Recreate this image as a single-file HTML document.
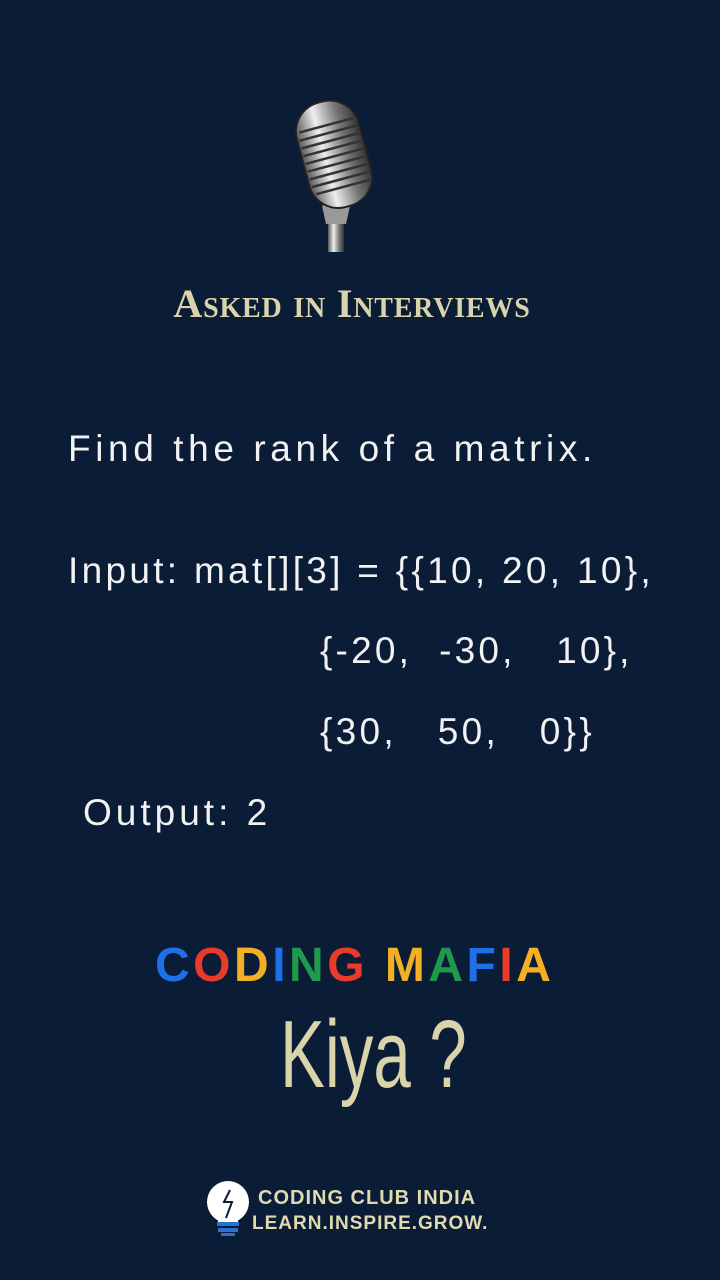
<!DOCTYPE html>
<html><head><meta charset="utf-8"><style>
html,body{margin:0;padding:0}
body{width:720px;height:1280px;background:#0b1c37;position:relative;overflow:hidden;font-family:"Liberation Sans",sans-serif;color:#f2f2f2}
.t{position:absolute;white-space:pre;font-size:37px;letter-spacing:4px;line-height:1}
</style></head><body>
<svg style="position:absolute;left:280px;top:94px" width="110" height="162" viewBox="0 0 110 162">
<defs><linearGradient id="g" x1="0" x2="1"><stop offset="0" stop-color="#555"/><stop offset=".35" stop-color="#eee"/><stop offset=".7" stop-color="#777"/><stop offset="1" stop-color="#333"/></linearGradient></defs>
<rect x="48" y="112" width="16" height="46" fill="url(#g)"/>
<path d="M42 112 Q56 104 70 112 L66 130 L46 130Z" fill="#999"/>
<g transform="rotate(-15 55 60)">
<rect x="22" y="6" width="64" height="108" rx="30" fill="url(#g)" stroke="#222" stroke-width="2"/>
<g stroke="#333" stroke-width="2.5">
<line x1="26" y1="30" x2="82" y2="30"/><line x1="24" y1="38" x2="84" y2="38"/><line x1="24" y1="46" x2="84" y2="46"/><line x1="24" y1="54" x2="84" y2="54"/><line x1="24" y1="62" x2="84" y2="62"/><line x1="24" y1="70" x2="84" y2="70"/><line x1="24" y1="78" x2="84" y2="78"/><line x1="24" y1="86" x2="84" y2="86"/><line x1="26" y1="94" x2="82" y2="94"/>
</g></g>
</svg>
<div style="position:absolute;left:0;width:704px;top:280px;text-align:center;font-family:'Liberation Serif',serif;font-weight:bold;font-variant:small-caps;font-size:40px;color:#d9d4a9;letter-spacing:0.8px">Asked in Interviews</div>
<div class="t" style="left:68px;top:430px;letter-spacing:4.6px">Find the rank of a matrix.</div>
<div class="t" style="left:68px;top:552px;letter-spacing:3.3px">Input: mat[][3] = {{10, 20, 10},</div>
<div class="t" style="left:320px;top:632px;letter-spacing:3.2px">{-20,  -30,   10},</div>
<div class="t" style="left:320px;top:713px;letter-spacing:3.3px">{30,   50,   0}}</div>
<div class="t" style="left:83px;top:794px">Output: 2</div>
<div style="position:absolute;left:155px;top:938px;font-family:'Liberation Sans',sans-serif;font-weight:bold;font-size:48px;letter-spacing:3.5px;white-space:pre"><span style="color:#1f6fe8">C</span><span style="color:#ea3a2a">O</span><span style="color:#f2b024">D</span><span style="color:#1f6fe8">I</span><span style="color:#1f9a4a">N</span><span style="color:#ea3a2a">G</span> <span style="color:#f2b024">M</span><span style="color:#1f9a4a">A</span><span style="color:#1f6fe8">F</span><span style="color:#ea3a2a">I</span><span style="color:#f2b024">A</span></div>
<div style="position:absolute;left:280px;top:1000px;font-family:'Liberation Sans Narrow','Liberation Sans',sans-serif;font-size:96px;color:#d9d4a9;transform:scaleX(.7);transform-origin:left;white-space:pre">Kiya ?</div>
<svg style="position:absolute;left:204px;top:1178px" width="48" height="60" viewBox="0 0 48 60">
<circle cx="24" cy="24" r="21" fill="#fff"/>
<rect x="14" y="36" width="20" height="10" fill="#fff"/>
<rect x="13" y="44" width="22" height="4" fill="#2c6fd1"/><rect x="14" y="50" width="20" height="4" fill="#2c6fd1"/><rect x="17" y="55" width="14" height="3" fill="#2c6fd1"/>
<path d="M26 12 L20 24 L28 24 L22 40" stroke="#0b1c37" stroke-width="2" fill="none"/>
</svg>
<div style="position:absolute;left:258px;top:1187px;font-weight:bold;font-size:20px;color:#e0dab0;letter-spacing:1px">CODING CLUB INDIA</div>
<div style="position:absolute;left:252px;top:1213px;font-weight:bold;font-size:19px;color:#e0dab0;letter-spacing:1px">LEARN.INSPIRE.GROW.</div>
</body></html>
